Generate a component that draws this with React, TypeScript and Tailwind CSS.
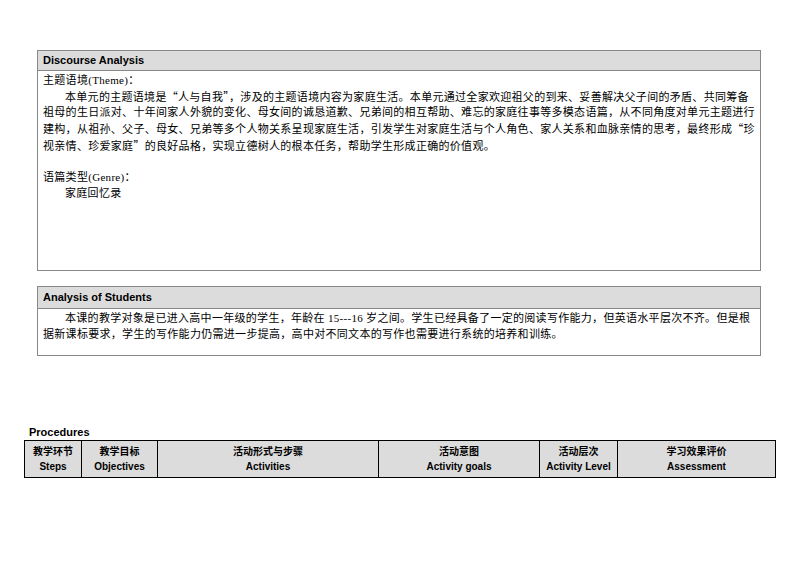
export default function App() {
  const cjk = { fontFamily: '"Liberation Serif","Noto Sans CJK SC",serif' };
  const sans = { fontFamily: '"Liberation Sans","Noto Sans CJK SC",sans-serif' };
  const Q = ({ c }: { c: string }) => <span style={{ fontFamily: '"Noto Sans CJK SC",sans-serif' }}>{c}</span>;
  const cols = [
    ["教学环节", "Steps", "w-[57px]"],
    ["教学目标", "Objectives", "w-[76px]"],
    ["活动形式与步骤", "Activities", "w-[221px]"],
    ["活动意图", "Activity goals", "w-[161px]"],
    ["活动层次", "Activity Level", "w-[78px]"],
    ["学习效果评价", "Assessment", "flex-1"],
  ];
  return (
    <div className="w-[794px] h-[561px] bg-white relative text-[11px] text-black" style={cjk}>
      <div className="pt-[50px] pl-[37px]">
        <div className="w-[724px] h-[221px] border border-[#888] flex flex-col">
          <div className="h-[20px] bg-[#dcdcdc] border-b border-[#888] px-[5px] flex items-center font-bold text-[11px]" style={sans}>Discourse Analysis</div>
          <div className="px-[5px] pt-[2px] leading-[15.7px] text-[11px] tracking-[0.3px]">
            <div>主题语境(Theme)：</div>
            <div className="indent-[22px]">本单元的主题语境是<Q c="“" />人与自我<Q c="”" />，涉及的主题语境内容为家庭生活。本单元通过全家欢迎祖父的到来、妥善解决父子间的矛盾、共同筹备祖母的生日派对、十年间家人外貌的变化、母女间的诚恳道歉、兄弟间的相互帮助、难忘的家庭往事等多模态语篇，从不同角度对单元主题进行建构，从祖孙、父子、母女、兄弟等多个人物关系呈现家庭生活，引发学生对家庭生活与个人角色、家人关系和血脉亲情的思考，最终形成<Q c="“" />珍视亲情、珍爱家庭<Q c="”" />的良好品格，实现立德树人的根本任务，帮助学生形成正确的价值观。</div>
            <div className="h-[15.7px]" />
            <div>语篇类型(Genre)：</div>
            <div className="pl-[22px]">家庭回忆录</div>
          </div>
        </div>
        <div className="mt-[15px] w-[724px] h-[70px] border border-[#888] flex flex-col">
          <div className="h-[22px] bg-[#dcdcdc] border-b border-[#888] px-[5px] flex items-center font-bold text-[11px]" style={sans}>Analysis of Students</div>
          <div className="px-[5px] pt-[2px] leading-[15.7px] indent-[22px] tracking-[0.3px]">本课的教学对象是已进入高中一年级的学生，年龄在 15---16 岁之间。学生已经具备了一定的阅读写作能力，但英语水平层次不齐。但是根据新课标要求，学生的写作能力仍需进一步提高，高中对不同文本的写作也需要进行系统的培养和训练。</div>
        </div>
      </div>
      <div className="pl-[29px] mt-[70px] font-bold text-[11px] leading-[12px]" style={sans}>Procedures</div>
      <div className="ml-[24px] mt-[2px] w-[752px] h-[38px] border border-black flex bg-[#dcdcdc] text-[10px] font-bold" style={sans}>
        {cols.map(([a, b, w], i) => (
          <div key={i} className={`${w} ${i < 5 ? "border-r border-black" : ""} flex flex-col items-center justify-center leading-[15px]`}>
            <div>{a}</div>
            <div>{b}</div>
          </div>
        ))}
      </div>
    </div>
  );
}
